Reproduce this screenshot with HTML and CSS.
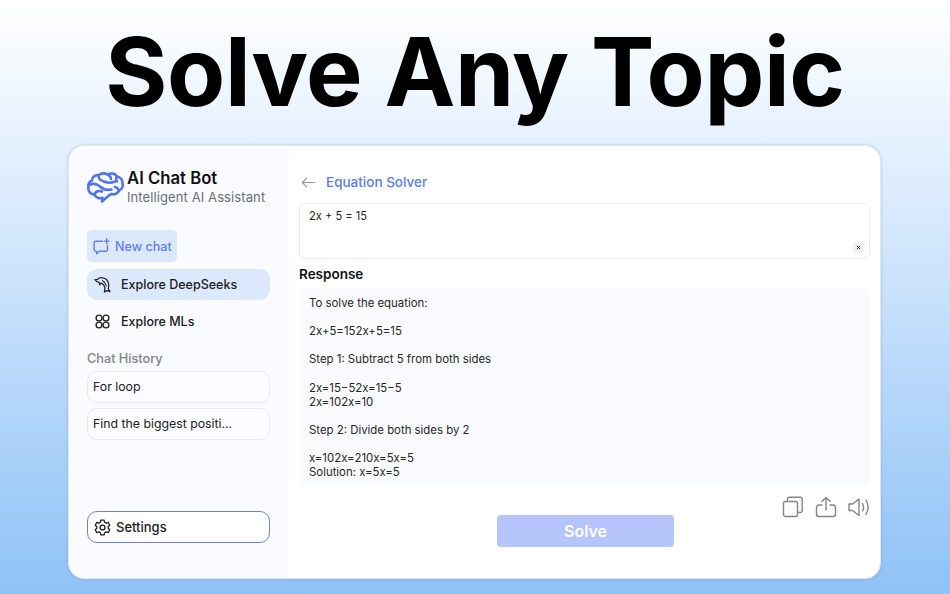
FILE: index.html
```html
<!DOCTYPE html>
<html lang="en">
<head>
<meta charset="utf-8">
<title>Solve Any Topic</title>
<link rel="stylesheet" href="styles.css">
</head>
<body>
<h1 class="headline">Solve Any Topic</h1>
<div class="window">
  <aside class="sidebar">
    <div class="brand">
      <svg class="brand-logo" viewBox="0 0 37 31" fill="none" stroke="#5273ea" stroke-width="2.600" stroke-linecap="round" stroke-linejoin="round">
        <path d="M15 29.500 L15.500 25.800 C12 27 8.500 25.500 7.500 22.500 C3.500 22.500 .8 19 1.500 15.500 C.8 12.500 2 9.500 5 8.500 C5 5 8 2.800 11.500 3.200 C14 1 18 .8 20.500 2.500 C24 .5 28.500 1.500 30 4.500 C33.500 5 35.800 8 35.300 11 C36.500 14 35 17.500 32 18.500 C31 21.500 27.500 23 24.500 22 C22 23 20.500 25 15 29.500 Z"/>
        <path d="M2 13 C6 11 10 12 13 14.500 C16 17.500 20 18.500 24.500 17.500"/>
        <path d="M11.500 3.200 C11 6.500 14 8.500 17 9.500 C20.500 11 24 11.500 28 9.500"/>
        <path d="M20.500 2.500 C22.500 3.500 24 5 24 7"/>
        <path d="M7.500 22.500 C8.500 19.500 11.500 18.500 15 19.500"/>
        <path d="M30 4.500 C29 6 29 8 30 9.500 M32 18.500 C31 16.500 29.500 15.500 28 15"/>
      </svg>
      <div class="brand-text">
        <div class="brand-name">AI Chat Bot</div>
        <div class="brand-sub">Intelligent AI Assistant</div>
      </div>
    </div>
    <div class="new-chat">
      <svg class="new-chat-icon" viewBox="0 0 18 18" fill="none" stroke="#5f7ff0" stroke-width="1.500" stroke-linecap="round" stroke-linejoin="round">
        <path d="M10 3.500 H3 a1.800 1.800 0 0 0 -1.800 1.800 v7 a1.800 1.800 0 0 0 1.800 1.800 h.8 v2.600 l3 -2.600 h6.700 a1.800 1.800 0 0 0 1.800 -1.800 V8"/>
        <path d="M14.500 .8 v5 M12 3.300 h5"/>
      </svg>
      <span>New chat</span>
    </div>
    <div class="nav-item nav-item-active">
      <svg class="nav-icon" viewBox="0 0 18 18" fill="none" stroke="#222" stroke-width="1.300" stroke-linecap="round" stroke-linejoin="round">
        <path d="M.8 4 L4 3.500 C5 2 7 1.500 9 2 C12.500 2.500 15 5 15.500 8.500 C15.800 10.500 15.500 12 15 13.500 L17 16.500 L13.500 15.500 L11 17 L11.500 13.500 C11.500 10.500 10 8.500 7.500 7.500 L6 9.500 L5.500 6.800 C3.500 6.500 1.800 5.500 .8 4 Z"/>
        <path d="M9 5 C11 6 12.500 8 13 10.500"/>
      </svg>
      <span>Explore DeepSeeks</span>
    </div>
    <div class="nav-item">
      <svg class="nav-icon" viewBox="0 0 18 18" fill="none" stroke="#222" stroke-width="1.400">
        <circle cx="5.300" cy="5.300" r="3.100"/><circle cx="12.700" cy="5.300" r="3.100"/>
        <circle cx="5.300" cy="12.700" r="3.100"/><circle cx="12.700" cy="12.700" r="3.100"/>
      </svg>
      <span>Explore MLs</span>
    </div>
    <div class="history-title">Chat History</div>
    <div class="history-item">For loop</div>
    <div class="history-item">Find the biggest positi...</div>
    <div class="settings">
      <svg class="settings-icon" viewBox="0 0 18 18" fill="none" stroke="#222" stroke-width="1.400" stroke-linejoin="round">
        <path d="M7.300 1.200 h3.400 l.5 2.200 1.600 .9 2.200 -.7 1.700 3 -1.700 1.500 v1.800 l1.700 1.500 -1.700 3 -2.200 -.7 -1.600 .9 -.5 2.200 h-3.400 l-.5 -2.200 -1.600 -.9 -2.200 .7 -1.700 -3 1.700 -1.500 v-1.800 l-1.700 -1.500 1.700 -3 2.200 .7 1.600 -.9 z"/>
        <circle cx="9" cy="9" r="2.600"/>
      </svg>
      <span>Settings</span>
    </div>
  </aside>
  <main class="content">
    <div class="content-head">
      <svg class="back" viewBox="0 0 16 12" fill="none" stroke="#9a9a9a" stroke-width="1.300" stroke-linecap="round" stroke-linejoin="round">
        <path d="M15 6 H1.200 M6 1.200 L1.200 6 L6 10.800"/>
      </svg>
      <span class="content-title">Equation Solver</span>
    </div>
    <div class="input-box">
      <div>2x + 5 = 15</div>
      <div class="clear">
        <svg class="clear-icon" viewBox="0 0 6 6" fill="none" stroke="#333" stroke-width="1.200"><path d="M1 1 L5 5 M5 1 L1 5"/></svg>
      </div>
    </div>
    <h2 class="response-title">Response</h2>
    <div class="response">
      <p>To solve the equation:</p>
      <p>2x+5=152x+5=15</p>
      <p>Step 1: Subtract 5 from both sides</p>
      <p>2x=15−52x=15−5<br>2x=102x=10</p>
      <p>Step 2: Divide both sides by 2</p>
      <p>x=102x=210x=5x=5<br>Solution: x=5x=5</p>
    </div>
    <div class="tools">
      <svg class="tool" viewBox="0 0 22 22" fill="none" stroke="#858585" stroke-width="1.400" stroke-linejoin="round">
        <rect x="1.500" y="5.500" width="14" height="15" rx="2"/>
        <path d="M5.500 5.500 V3 a1.700 1.700 0 0 1 1.700 -1.700 h11 a2 2 0 0 1 2 2 v11.500 a1.700 1.700 0 0 1 -1.700 1.700 h-3"/>
      </svg>
      <svg class="tool" viewBox="0 0 22 22" fill="none" stroke="#858585" stroke-width="1.400" stroke-linecap="round" stroke-linejoin="round">
        <path d="M7 9 H4 a2.500 2.500 0 0 0 -2.500 2.500 v6.500 a2.500 2.500 0 0 0 2.500 2.500 h14 a2.500 2.500 0 0 0 2.500 -2.500 v-6.500 a2.500 2.500 0 0 0 -2.500 -2.500 h-3"/>
        <path d="M11 14 V1.500 M7 5.300 L11 1.500 L15 5.300"/>
      </svg>
      <svg class="tool" viewBox="0 0 22 22" fill="none" stroke="#858585" stroke-width="1.400" stroke-linecap="round" stroke-linejoin="round">
        <path d="M1 8 v6.500 h3.500 l6.500 5 V3 l-6.500 5 z"/>
        <path d="M14.500 7.500 c1.300 2.300 1.300 5.200 0 7.500 M18 4 c2.600 4.500 2.600 10 0 14.500"/>
      </svg>
    </div>
    <div class="solve-row"><div class="solve">Solve</div></div>
  </main>
</div>
</body>
</html>
```

FILE: styles.css
```css
* { box-sizing: border-box; }
html, body { margin: 0; padding: 0; height: 100%; }
body {
  width: 950px;
  height: 594px;
  overflow: hidden;
  font-family: Inter, "Liberation Sans", sans-serif;
  color: #1a1a1a;
  background: linear-gradient(180deg, #ffffff 0%, #e4f0fe 25%, #8fc2f6 100%);
}
.headline {
  margin: 0;
  height: 145px;
  padding-top: 14px;
  font-size: 95px;
  line-height: 116px;
  font-weight: 750;
  letter-spacing: -.4px;
  color: #000;
  text-align: center;
  white-space: nowrap;
}
.window {
  display: flex;
  width: 813px;
  height: 434px;
  margin-left: 68px;
  background: #fff;
  border: 1px solid #e3e8ef;
  border-radius: 16px;
  overflow: hidden;
  box-shadow: 0 0 3px rgba(90, 120, 160, .35);
}
.sidebar {
  width: 220px;
  flex: none;
  display: flex;
  flex-direction: column;
  padding: 23px 19px 35px 18px;
  background: #f9fbff;
}
.brand { display: flex; align-items: center; gap: 3px; height: 36px; margin-bottom: 25px; }
.brand-logo { width: 37px; height: 31px; flex: none; }
.brand-name { font-size: 16.700px; line-height: 20px; font-weight: 600; color: #111; }
.brand-sub { font-size: 13px; line-height: 18px; color: #6b6f76; letter-spacing: .1px; white-space: nowrap; }
.new-chat {
  display: flex;
  align-items: center;
  gap: 5px;
  width: 90px;
  height: 32px;
  padding-left: 6px;
  background: #dce8fb;
  border-radius: 5px;
  font-size: 12.600px;
  font-weight: 500;
  color: #5f7ff0;
  margin-bottom: 7px;
}
.new-chat-icon { width: 17px; height: 17px; flex: none; }
.nav-item {
  display: flex;
  align-items: center;
  gap: 10px;
  height: 31px;
  padding-left: 7px;
  border-radius: 10px;
  font-size: 12.500px;
  font-weight: 500;
  color: #1c1c1c;
  margin-bottom: 6px;
}
.nav-item-active { background: #dce8fb; }
.nav-icon { width: 17px; height: 17px; flex: none; }
.history-title { margin-top: 6px; font-size: 12.700px; line-height: 20px; font-weight: 500; color: #808387; margin-bottom: 2px; }
.history-item {
  display: flex;
  align-items: center;
  height: 32px;
  padding-left: 5px;
  padding-bottom: 1px;
  border: 1px solid #e6e9ee;
  border-radius: 10px;
  background: #fbfcff;
  font-size: 12.300px;
  color: #222;
  margin-bottom: 5px;
}
.settings {
  margin-top: auto;
  display: flex;
  align-items: center;
  gap: 5px;
  height: 32px;
  padding-left: 6px;
  background: #fff;
  border: 1.500px solid #6a82dc;
  border-radius: 10px;
  font-size: 13px;
  font-weight: 500;
  color: #1c1c1c;
}
.settings-icon { width: 17px; height: 17px; flex: none; }
.content { flex: 1; display: flex; flex-direction: column; padding: 25px 10px 0 10px; min-width: 0; }
.content-head { display: flex; align-items: center; gap: 10px; height: 22px; padding-left: 2px; margin-bottom: 10px; }
.back { width: 15px; height: 11px; flex: none; }
.content-title { font-size: 13.500px; font-weight: 500; color: #5c7be6; }
.input-box {
  position: relative;
  height: 56px;
  padding: 4px 9px;
  border: 1px solid #e9ebef;
  border-radius: 5px;
  font-size: 11.100px;
  line-height: 16px;
  color: #262626;
}
.clear {
  position: absolute;
  right: 4px;
  bottom: 4px;
  width: 13px;
  height: 13px;
  display: flex;
  align-items: center;
  justify-content: center;
  background: #f0f1f3;
  border-radius: 50%;
}
.clear-icon { width: 5px; height: 5px; }
.response-title { margin: 6px 0 5px; font-size: 13.500px; line-height: 18px; font-weight: 600; color: #111; }
.response {
  height: 197px;
  padding: 8px 10px 0;
  background: #f9fbff;
  border-radius: 4px;
  font-size: 11.400px;
  line-height: 14.200px;
  color: #262626;
}
.response p { margin: 0 0 14px; }
.tools { display: flex; justify-content: flex-end; gap: 11px; margin-top: 11px; height: 22px; }
.tool { width: 22px; height: 22px; flex: none; }
.solve-row { display: flex; justify-content: center; margin-top: -3px; padding-left: 2px; }
.solve {
  width: 177px;
  height: 32px;
  display: flex;
  align-items: center;
  justify-content: center;
  background: #b5c4fb;
  border-radius: 4px;
  color: #fff;
  font-size: 16px;
  font-weight: 600;
}
```
